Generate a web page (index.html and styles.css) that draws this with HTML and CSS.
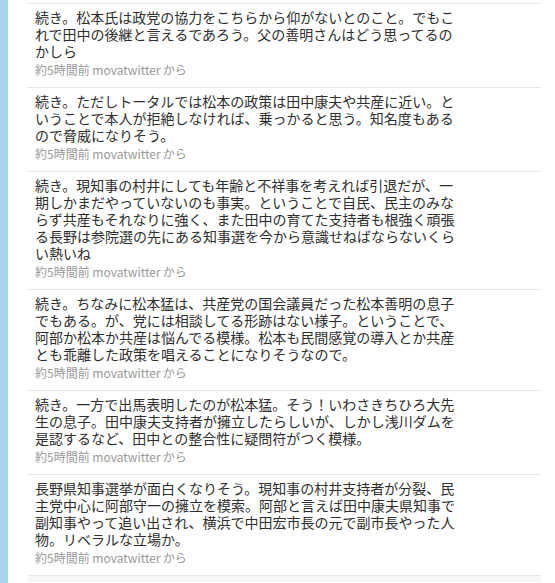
FILE: index.html
```html
<!DOCTYPE html>
<html lang="ja">
<head>
<meta charset="utf-8">
<link rel="stylesheet" href="styles.css">
</head>
<body>
<div class="page">
  <div class="strip"></div>
  <ol class="timeline">
    <li class="status">
      <p class="text">続き。松本氏は政党の協力をこちらから仰がないとのこと。でもこれで田中の後継と言えるであろう。父の善明さんはどう思ってるのかしら</p>
      <p class="meta">約5時間前 <span class="src">movatwitter</span>から</p>
    </li>
    <li class="status">
      <p class="text">続き。ただしトータルでは松本の政策は田中康夫や共産に近い。ということで本人が拒絶しなければ、乗っかると思う。知名度もあるので脅威になりそう。</p>
      <p class="meta">約5時間前 <span class="src">movatwitter</span>から</p>
    </li>
    <li class="status">
      <p class="text">続き。現知事の村井にしても年齢と不祥事を考えれば引退だが、一期しかまだやっていないのも事実。ということで自民、民主のみならず共産もそれなりに強く、また田中の育てた支持者も根強く頑張る長野は参院選の先にある知事選を今から意識せねばならないくらい熱いね</p>
      <p class="meta">約5時間前 <span class="src">movatwitter</span>から</p>
    </li>
    <li class="status">
      <p class="text">続き。ちなみに松本猛は、共産党の国会議員だった松本善明の息子でもある。が、党には相談してる形跡はない様子。ということで、阿部か松本か共産は悩んでる模様。松本も民間感覚の導入とか共産とも乖離した政策を唱えることになりそうなので。</p>
      <p class="meta">約5時間前 <span class="src">movatwitter</span>から</p>
    </li>
    <li class="status">
      <p class="text">続き。一方で出馬表明したのが松本猛。そう！いわさきちひろ大先生の息子。田中康夫支持者が擁立したらしいが、しかし浅川ダムを是認するなど、田中との整合性に疑問符がつく模様。</p>
      <p class="meta">約5時間前 <span class="src">movatwitter</span>から</p>
    </li>
    <li class="status">
      <p class="text">長野県知事選挙が面白くなりそう。現知事の村井支持者が分裂、民主党中心に阿部守一の擁立を模索。阿部と言えば田中康夫県知事で副知事やって追い出され、横浜で中田宏市長の元で副市長やった人物。リベラルな立場か。</p>
      <p class="meta">約5時間前 <span class="src">movatwitter</span>から</p>
    </li>
    <li class="more"></li>
  </ol>
</div>
</body>
</html>
```

FILE: styles.css
```css
html, body {
  margin: 0;
  padding: 0;
  background: #ffffff;
}

body {
  font-family: "Noto Sans CJK JP", "Noto Sans", sans-serif;
  color: #333333;
  height: 583px;
  overflow: hidden;
}

.page {
  display: flex;
  align-items: stretch;
  height: 583px;
}

.strip {
  width: 8px;
  flex: none;
  background: #a9d5ef;
}

.timeline {
  list-style: none;
  margin: 3px 0 0 19px;
  padding: 0;
  width: 514px;
}

.status {
  border-top: 1px solid #e6e6e6;
  padding: 5px 0 9px 8px;
}

.text {
  margin: 0;
  width: 426px;
  font-size: 14px;
  line-height: 17px;
  color: #2e2e2e;
}

.meta {
  margin: 2px 0 0;
  font-size: 12px;
  line-height: 16px;
  color: #999999;
}

.src {
  margin-right: 2px;
}

.more {
  border-top: 1px solid #e6e6e6;
  background: #f6f6f6;
  height: 6px;
  margin-left: 1px;
}
```
